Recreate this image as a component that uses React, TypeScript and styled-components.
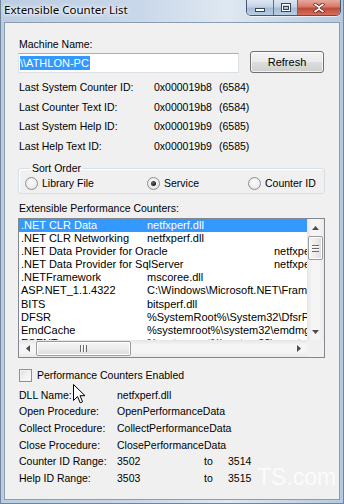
import styled, { createGlobalStyle } from "styled-components";

const GlobalStyle = createGlobalStyle`
  html, body {
    margin: 0;
    padding: 0;
    background: #ffffff;
  }
  body {
    font-family: "Liberation Sans", Arial, sans-serif;
    color: #000;
  }
`;

interface Counter {
    name: string;
    file: string;
    wide?: boolean;
    selected?: boolean;
}

const counters: Counter[] = [
    { name: ".NET CLR Data", file: "netfxperf.dll", selected: true },
    { name: ".NET CLR Networking", file: "netfxperf.dll" },
    { name: ".NET Data Provider for Oracle", file: "netfxperf.dll", wide: true },
    { name: ".NET Data Provider for SqlServer", file: "netfxperf.dll", wide: true },
    { name: ".NETFramework", file: "mscoree.dll" },
    { name: "ASP.NET_1.1.4322", file: "C:\\Windows\\Microsoft.NET\\Framework\\v1.1.4322\\aspnet_isapi.dll" },
    { name: "BITS", file: "bitsperf.dll" },
    { name: "DFSR", file: "%SystemRoot%\\System32\\DfsrPerf.dll" },
    { name: "EmdCache", file: "%systemroot%\\system32\\emdmgmt.dll" },
    { name: "ESENT", file: "%systemroot%\\system32\\esentprf.dll" },
];

const systemIds = [
    { label: "Last System Counter ID:", hex: "0x000019b8", dec: "(6584)" },
    { label: "Last Counter Text ID:", hex: "0x000019b8", dec: "(6584)" },
    { label: "Last System Help ID:", hex: "0x000019b9", dec: "(6585)" },
    { label: "Last Help Text ID:", hex: "0x000019b9", dec: "(6585)" },
];

export default function App() {
    return (
        <>
            <GlobalStyle />
            <StyledWindow>
                <StyledTitleBar>
                    <StyledTitle>Extensible Counter List</StyledTitle>
                    <StyledCaptionButtons>
                        <StyledCaptionButton $kind="min">
                            <svg width="10" height="4" viewBox="0 0 10 4">
                                <rect x="0.5" y="0.5" width="9" height="3" fill="#fff" stroke="#34465f" />
                            </svg>
                        </StyledCaptionButton>
                        <StyledCaptionButton $kind="max">
                            <svg width="10" height="9" viewBox="0 0 10 9">
                                <rect x="0.5" y="0.5" width="9" height="8" fill="none" stroke="#34465f" />
                                <rect x="1.5" y="1.5" width="7" height="6" fill="none" stroke="#fff" />
                                <rect x="2.5" y="3.5" width="5" height="3" fill="none" stroke="#34465f" />
                            </svg>
                        </StyledCaptionButton>
                        <StyledCaptionButton $kind="close">
                            <svg width="12" height="10" viewBox="0 0 12 10">
                                <path d="M1 0.5 L6 4 L11 0.5 M1 9.5 L6 6 L11 9.5" stroke="#5a1a12" strokeWidth="3.2" fill="none" />
                                <path d="M1.5 1 L6 4.2 L10.5 1 M1.5 9 L6 5.8 L10.5 9" stroke="#fff" strokeWidth="1.8" fill="none" />
                            </svg>
                        </StyledCaptionButton>
                    </StyledCaptionButtons>
                </StyledTitleBar>

                <StyledClient>
                    <StyledMachineRow>
                        <StyledMachineColumn>
                            <StyledLabel>Machine Name:</StyledLabel>
                            <StyledTextBox>
                                <StyledSelectedText>\\ATHLON-PC</StyledSelectedText>
                            </StyledTextBox>
                        </StyledMachineColumn>
                        <StyledButton>Refresh</StyledButton>
                    </StyledMachineRow>

                    <StyledInfoGrid>
                        {systemIds.map((row) => (
                            <StyledInfoRow key={row.label}>
                                <span>{row.label}</span>
                                <span>{row.hex}</span>
                                <span>{row.dec}</span>
                            </StyledInfoRow>
                        ))}
                    </StyledInfoGrid>

                    <StyledGroupBox>
                        <StyledLegend>Sort Order</StyledLegend>
                        <StyledRadioRow>
                            <StyledOption>
                                <StyledRadio />
                                Library File
                            </StyledOption>
                            <StyledOption>
                                <StyledRadio $checked />
                                Service
                            </StyledOption>
                            <StyledOption>
                                <StyledRadio />
                                Counter ID
                            </StyledOption>
                        </StyledRadioRow>
                    </StyledGroupBox>

                    <StyledListLabel>Extensible Performance Counters:</StyledListLabel>
                    <StyledListBox>
                        <StyledListRows>
                            {counters.map((c) => (
                                <StyledListRow key={c.name} className={c.selected ? "selected" : undefined}>
                                    <StyledCounterName $wide={c.wide}>{c.name}</StyledCounterName>
                                    <span>{c.file}</span>
                                </StyledListRow>
                            ))}
                        </StyledListRows>
                        <StyledVScroll>
                            <StyledArrowButton>
                                <svg width="7" height="4" viewBox="0 0 7 4">
                                    <path d="M0 4 L3.5 0 L7 4 Z" fill="#4d4d4d" />
                                </svg>
                            </StyledArrowButton>
                            <StyledVThumb>
                                <StyledGrip $vertical />
                            </StyledVThumb>
                            <StyledTrackFill />
                            <StyledArrowButton>
                                <svg width="7" height="4" viewBox="0 0 7 4">
                                    <path d="M0 0 L3.5 4 L7 0 Z" fill="#4d4d4d" />
                                </svg>
                            </StyledArrowButton>
                        </StyledVScroll>
                        <StyledHScroll>
                            <StyledArrowButton>
                                <svg width="4" height="7" viewBox="0 0 4 7">
                                    <path d="M4 0 L0 3.5 L4 7 Z" fill="#4d4d4d" />
                                </svg>
                            </StyledArrowButton>
                            <StyledHThumb>
                                <StyledGrip />
                            </StyledHThumb>
                            <StyledTrackFill />
                            <StyledArrowButton>
                                <svg width="4" height="7" viewBox="0 0 4 7">
                                    <path d="M0 0 L4 3.5 L0 7 Z" fill="#4d4d4d" />
                                </svg>
                            </StyledArrowButton>
                        </StyledHScroll>
                        <StyledCorner />
                    </StyledListBox>

                    <StyledCheckRow>
                        <StyledCheckBox />
                        Performance Counters Enabled
                    </StyledCheckRow>

                    <StyledDetails>
                        <StyledDetailRow>
                            <span>DLL Name:</span>
                            <span>netfxperf.dll</span>
                        </StyledDetailRow>
                        <StyledDetailRow>
                            <span>Open Procedure:</span>
                            <span>OpenPerformanceData</span>
                        </StyledDetailRow>
                        <StyledDetailRow>
                            <span>Collect Procedure:</span>
                            <span>CollectPerformanceData</span>
                        </StyledDetailRow>
                        <StyledDetailRow>
                            <span>Close Procedure:</span>
                            <span>ClosePerformanceData</span>
                        </StyledDetailRow>
                        <StyledDetailRow>
                            <span>Counter ID Range:</span>
                            <StyledRange>
                                <span>3502</span>
                                <span>to</span>
                                <span>3514</span>
                            </StyledRange>
                        </StyledDetailRow>
                        <StyledDetailRow>
                            <span>Help ID Range:</span>
                            <StyledRange>
                                <span>3503</span>
                                <span>to</span>
                                <span>3515</span>
                            </StyledRange>
                        </StyledDetailRow>
                    </StyledDetails>
                </StyledClient>

                <StyledCursor width="13" height="20" viewBox="0 0 13 20">
                    <path d="M0.5 0.5 L0.5 16.5 L4.5 12.5 L7.2 18.8 L9.6 17.8 L7 11.7 L12 11.7 Z" fill="#fff" stroke="#000" strokeWidth="1" strokeLinejoin="round" />
                </StyledCursor>
                <StyledWatermark>TS.com</StyledWatermark>
            </StyledWindow>
        </>
    );
}

const StyledWindow = styled.div`
    position: relative;
    width: 344px;
    height: 504px;
    box-sizing: border-box;
    display: flex;
    flex-direction: column;
    padding: 0 3px 3px 3px;
    background: linear-gradient(90deg, #bccde2 0%, #c8d7e9 40%, #dfe8f2 66%, #b5c9de 100%);
    border-left: 1px solid #6f869f;
    border-right: 1px solid #6f869f;
    border-bottom: 1px solid #6f869f;
    overflow: hidden;
`;

const StyledTitleBar = styled.div`
    height: 22px;
    display: flex;
    align-items: flex-start;
    justify-content: space-between;
    margin: 0 -2px 0 -1px;
`;

const StyledTitle = styled.div`
    font-family: "Noto Sans", "Open Sans", sans-serif;
    font-size: 11.5px;
    line-height: 14px;
    margin-top: 3px;
    padding-left: 1px;
    color: #000;
    text-shadow: 0 0 6px #fff, 0 0 4px #fff, 0 0 2px #fff;
`;

const StyledCaptionButtons = styled.div`
    display: flex;
    margin-right: 1px;
    border: 1px solid #45586f;
    border-top: none;
    border-radius: 0 0 5px 5px;
    overflow: hidden;
    box-shadow: 0 1px 0 rgba(255, 255, 255, 0.6);
`;

const StyledCaptionButton = styled.div<{ $kind: "min" | "max" | "close" }>`
    height: 15px;
    width: ${({ $kind }) => ($kind === "close" ? "43px" : $kind === "min" ? "26px" : "24px")};
    display: flex;
    align-items: center;
    justify-content: center;
    box-sizing: border-box;
    border-left: ${({ $kind }) => ($kind === "min" ? "none" : "1px solid #5c6f88")};
    background: ${({ $kind }) =>
        $kind === "close"
            ? "linear-gradient(180deg, #e8a99d 0%, #d57a6b 45%, #c24a36 55%, #d4705c 100%)"
            : "linear-gradient(180deg, #dde7f2 0%, #c3d3e6 45%, #a6bcd6 55%, #b9cde2 100%)"};

    svg {
        margin-top: ${({ $kind }) => ($kind === "min" ? "5px" : "0")};
    }
`;

const StyledClient = styled.div`
    flex: 1;
    display: flex;
    flex-direction: column;
    background: #f0f0f0;
    border: 1px solid #8b9db3;
    padding: 15px 14px 0 13px;
    font-size: 10.5px;
    line-height: 13px;
`;

const StyledMachineRow = styled.div`
    display: flex;
    align-items: flex-end;
    justify-content: space-between;
`;

const StyledMachineColumn = styled.div`
    display: flex;
    flex-direction: column;
    gap: 2px;
`;

const StyledLabel = styled.div`
    padding-left: 1px;
`;

const StyledTextBox = styled.div`
    width: 221px;
    height: 20px;
    box-sizing: border-box;
    background: #fff;
    border: 1px solid #dbdfe6;
    border-top-color: #abadb3;
    border-left-color: #e2e3ea;
    display: flex;
    align-items: center;
    padding-left: 1px;
    font-size: 11px;
`;

const StyledSelectedText = styled.span`
    background: #3399ff;
    color: #fff;
    line-height: 14px;
    padding-right: 1px;
`;

const StyledButton = styled.div`
    width: 74px;
    height: 22px;
    box-sizing: border-box;
    margin-right: 1px;
    border: 1px solid #707070;
    border-radius: 3px;
    background: linear-gradient(180deg, #f2f2f2 0%, #ebebeb 48%, #dddddd 52%, #cfcfcf 100%);
    box-shadow: inset 0 0 0 1px rgba(255, 255, 255, 0.7);
    display: flex;
    align-items: center;
    justify-content: center;
    font-size: 11px;
`;

const StyledInfoGrid = styled.div`
    margin-top: 5px;
    display: flex;
    flex-direction: column;
`;

const StyledInfoRow = styled.div`
    display: grid;
    grid-template-columns: 135px 65px auto;
    height: 19.5px;
    align-items: center;
    padding-left: 1px;
`;

const StyledGroupBox = styled.fieldset`
    margin: 6px 0 0 0;
    padding: 2px 0 3px 6px;
    border: 1px solid #d5dfe5;
    border-radius: 3px;
    box-shadow: inset 1px 1px 0 #fff;
    min-width: 0;
`;

const StyledLegend = styled.legend`
    padding: 0 2px;
    margin-left: 5px;
    line-height: 13px;
`;

const StyledRadioRow = styled.div`
    display: grid;
    grid-template-columns: 122px 101px auto;
`;

const StyledOption = styled.div`
    display: flex;
    align-items: center;
    gap: 4px;
    height: 13px;
`;

const StyledRadio = styled.span<{ $checked?: boolean }>`
    width: 13px;
    height: 13px;
    box-sizing: border-box;
    border-radius: 50%;
    border: 1px solid #8e8f8f;
    background: radial-gradient(circle at 50% 40%, #fbfbfb 0%, #eeeeee 55%, #d6d6d6 100%);
    position: relative;

    &::after {
        content: "";
        display: ${({ $checked }) => ($checked ? "block" : "none")};
        position: absolute;
        left: 3px;
        top: 3px;
        width: 5px;
        height: 5px;
        border-radius: 50%;
        background: radial-gradient(circle at 40% 35%, #6d6d6d 0%, #1a1a1a 70%);
    }
`;

const StyledListLabel = styled.div`
    margin-top: 8px;
    padding-left: 1px;
`;

const StyledListBox = styled.div`
    margin-top: 3px;
    height: 140px;
    box-sizing: border-box;
    border: 1px solid #828790;
    background: #fff;
    display: grid;
    grid-template-columns: 1fr 17px;
    grid-template-rows: 1fr 17px;
    overflow: hidden;
`;

const StyledListRows = styled.div`
    overflow: hidden;
    font-size: 11px;
`;

const StyledListRow = styled.div`
    display: flex;
    height: 13.1px;
    line-height: 13px;
    padding-left: 2px;
    white-space: nowrap;
    overflow: hidden;

    &.selected {
        background: #3399ff;
        color: #fff;
    }
`;

const StyledCounterName = styled.span<{ $wide?: boolean }>`
    flex: none;
    width: ${({ $wide }) => ($wide ? "253px" : "126px")};
`;

const StyledVScroll = styled.div`
    display: flex;
    flex-direction: column;
    background: linear-gradient(90deg, #e6e6e6 0%, #f5f5f5 30%, #f5f5f5 70%, #e9e9e9 100%);
`;

const StyledHScroll = styled.div`
    display: flex;
    background: linear-gradient(180deg, #e6e6e6 0%, #f5f5f5 30%, #f5f5f5 70%, #e9e9e9 100%);
`;

const StyledArrowButton = styled.div`
    flex: none;
    width: 17px;
    height: 17px;
    display: flex;
    align-items: center;
    justify-content: center;
`;

const StyledTrackFill = styled.div`
    flex: 1;
`;

const StyledVThumb = styled.div`
    flex: none;
    height: 24px;
    margin: 0 1px;
    box-sizing: border-box;
    border: 1px solid #9b9b9b;
    border-radius: 2px;
    background: linear-gradient(90deg, #f6f6f6 0%, #ececec 50%, #dcdcdc 100%);
    box-shadow: inset 0 0 0 1px #fff;
    display: flex;
    align-items: center;
    justify-content: center;
`;

const StyledHThumb = styled.div`
    flex: none;
    width: 95px;
    margin: 1px 0;
    box-sizing: border-box;
    border: 1px solid #9b9b9b;
    border-radius: 2px;
    background: linear-gradient(180deg, #f6f6f6 0%, #ececec 50%, #dcdcdc 100%);
    box-shadow: inset 0 0 0 1px #fff;
    display: flex;
    align-items: center;
    justify-content: center;
`;

const StyledGrip = styled.span<{ $vertical?: boolean }>`
    width: 7px;
    height: 7px;
    background: ${({ $vertical }) =>
        $vertical
            ? "repeating-linear-gradient(180deg, #6b6b6b 0 1px, #ffffff 1px 2px, transparent 2px 3px)"
            : "repeating-linear-gradient(90deg, #6b6b6b 0 1px, #ffffff 1px 2px, transparent 2px 3px)"};
`;

const StyledCorner = styled.div`
    background: #f0f0f0;
`;

const StyledCheckRow = styled.div`
    margin-top: 11px;
    display: flex;
    align-items: center;
    gap: 5px;
    height: 13px;
    padding-left: 1px;
`;

const StyledCheckBox = styled.span`
    width: 13px;
    height: 13px;
    box-sizing: border-box;
    border: 1px solid #8e8f8f;
    background: linear-gradient(135deg, #dcdcdc 0%, #f0f0f0 50%, #fcfcfc 100%);
    box-shadow: inset 0 0 0 1px #f4f4f4;
`;

const StyledDetails = styled.div`
    margin-top: 5px;
    display: flex;
    flex-direction: column;
`;

const StyledDetailRow = styled.div`
    display: grid;
    grid-template-columns: 98px auto;
    height: 16.6px;
    align-items: center;
    padding-left: 1px;
`;

const StyledRange = styled.div`
    display: grid;
    grid-template-columns: 87px 24px auto;
`;

const StyledCursor = styled.svg`
    position: absolute;
    left: 72px;
    top: 384px;
`;

const StyledWatermark = styled.div`
    position: absolute;
    left: 256px;
    top: 464px;
    font-family: "Liberation Sans", Arial, sans-serif;
    font-size: 23px;
    line-height: 26px;
    color: rgba(255, 255, 255, 0.75);
    pointer-events: none;
`;
